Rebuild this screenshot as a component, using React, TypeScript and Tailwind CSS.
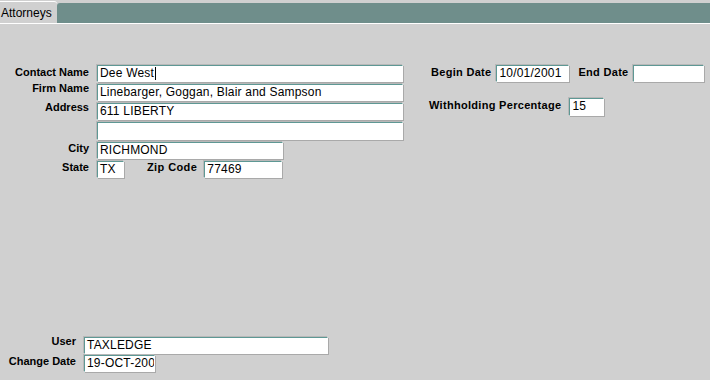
import type { ReactNode } from "react"

const field =
  "h-[17px] border border-t-[#5e9894] border-l-[#5e9894] border-r-white border-b-white bg-white shadow-[1px_1px_0_#a9a9a9,-1px_-1px_0_#b8b8b8] px-[2px] text-[12px] leading-[15px] tracking-[0.2px] text-black whitespace-nowrap overflow-hidden"

function Field({ w, children }: { w: string; children?: ReactNode }) {
  return <div className={`${field} ${w}`}>{children}</div>
}

function Label({ children, className = "" }: { children: ReactNode; className?: string }) {
  return (
    <span className={`text-[11px] font-bold leading-[13px] text-black whitespace-nowrap ${className}`}>
      {children}
    </span>
  )
}

export default function App() {
  return (
    <div className="flex h-[380px] w-[710px] flex-col overflow-hidden bg-[#d0d0d0] font-['Liberation_Sans',Arial,sans-serif]">
      <div className="flex h-[23px] items-end">
        <div className="flex h-[22px] w-[57px] items-center rounded-tr-[3px] border-t border-white bg-[#d0d0d0] pl-[1px] text-[12px] text-black">
          Attorneys
        </div>
        <div className="h-[20px] flex-1 rounded-tl-[3px] bg-[#6f8e8b]" />
      </div>
      <div className="h-px bg-white" />

      <div className="mt-[41px] flex">
        <div className="flex w-[429px] flex-col gap-[2px]">
          <div className="flex items-start gap-[8px]">
            <Label className="mt-[1px] w-[89px] text-right">Contact Name</Label>
            <Field w="w-[306px]">
              Dee West<span className="ml-px inline-block h-[13px] w-px bg-black align-middle" />
            </Field>
          </div>
          <div className="flex items-start gap-[8px]">
            <Label className="-mt-[2px] w-[89px] text-right">Firm Name</Label>
            <Field w="w-[306px]">Linebarger, Goggan, Blair and Sampson</Field>
          </div>
          <div className="flex items-start gap-[8px]">
            <Label className="-mt-[2px] w-[89px] text-right">Address</Label>
            <Field w="w-[306px]">611 LIBERTY</Field>
          </div>
          <div className="flex items-start gap-[8px]">
            <span className="w-[89px]" />
            <Field w="w-[306px] h-[18px]" />
          </div>
          <div className="flex items-start gap-[8px]">
            <Label className="w-[89px] text-right">City</Label>
            <Field w="w-[186px]">RICHMOND</Field>
          </div>
          <div className="flex items-start gap-[8px]">
            <Label className="w-[89px] text-right">State</Label>
            <Field w="w-[27px]">TX</Field>
            <Label className="ml-[15px] tracking-[0.4px]">Zip Code</Label>
            <Field w="w-[78px] ml-[-1px]">77469</Field>
          </div>
        </div>

        <div className="flex flex-col">
          <div className="flex items-start">
            <Label className="ml-[2px] mt-[1px] tracking-[0.3px]">Begin Date</Label>
            <Field w="w-[73px] ml-[5px]">10/01/2001</Field>
            <Label className="ml-[9px] mt-[1px] tracking-[0.3px]">End Date</Label>
            <Field w="w-[71px] ml-[4px]" />
          </div>
          <div className="mt-[16px] flex items-start">
            <Label className="mt-[1px] tracking-[0.3px]">Withholding Percentage</Label>
            <Field w="w-[35px] ml-[8px] h-[18px]">15</Field>
          </div>
        </div>
      </div>

      <div className="mt-auto mb-[8px] flex flex-col gap-[1px]">
        <div className="flex items-start gap-[8px]">
          <Label className="-mt-[2px] w-[76px] text-right">User</Label>
          <Field w="w-[244px]">TAXLEDGE</Field>
        </div>
        <div className="flex items-start gap-[8px]">
          <Label className="w-[76px] text-right">Change Date</Label>
          <Field w="w-[71px]">19-OCT-200</Field>
        </div>
      </div>
    </div>
  )
}
